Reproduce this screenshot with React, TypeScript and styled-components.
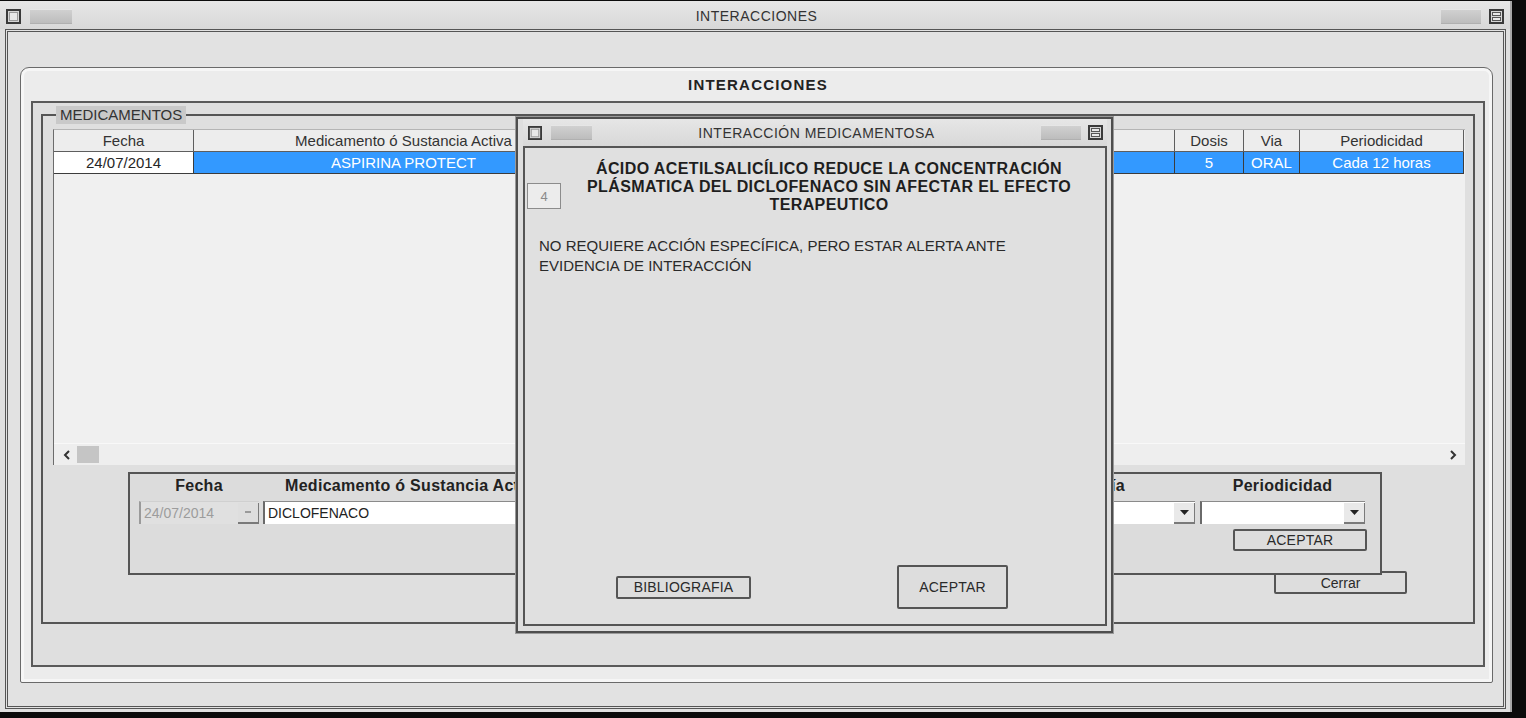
import styled, { createGlobalStyle } from "styled-components";

const GlobalStyle = createGlobalStyle`
  body {
    margin: 0;
    background: #0b0b0b;
    font-family: "Liberation Sans", Arial, sans-serif;
    color: #262626;
  }
`;

const Screen = styled.div`
  position: relative;
  width: 1526px;
  height: 718px;
  background: #0b0b0b;
  overflow: hidden;
`;

const Window = styled.div`
  width: 1510px;
  height: 711px;
  margin-top: 1px;
  background: #e0e0e0;
  border-right: 2px solid #a8a8a8;
  display: flex;
  flex-direction: column;
`;

const TitleBar = styled.div<{ $small?: boolean }>`
  display: flex;
  align-items: center;
  flex: none;
  box-sizing: border-box;
  height: ${(p) => (p.$small ? "27px" : "28px")};
  padding: ${(p) => (p.$small ? "0 4px 0 5px" : "2px 6px 0 6px")};
  background: linear-gradient(#e6e6e6, #d8d8d8);
`;

const TitleText = styled.div`
  flex: 1;
  text-align: center;
  font-size: 14px;
  letter-spacing: 0.5px;
  color: #333;
`;

const Grip = styled.div<{ $w: number; $gap: number; $side: "left" | "right" }>`
  width: ${(p) => p.$w}px;
  height: 13px;
  ${(p) => (p.$side === "left" ? `margin-left: ${p.$gap}px;` : `margin-right: ${p.$gap}px;`)}
  background: linear-gradient(#d0d0d0, #bdbdbd);
  border-top: 1px solid #e6e6e6;
  border-bottom: 1px solid #b0b0b0;
`;

const Client = styled.div`
  flex: 1;
  display: flex;
  margin: 0 4px 3px 5px;
  border: 3px double #555;
  padding: 35px 10px 23px 12px;
  background: #e2e2e2;
`;

const Panel = styled.div`
  flex: 1;
  display: flex;
  flex-direction: column;
  border: 1px solid #6a6a6a;
  border-radius: 9px 9px 2px 2px;
  background: #ececec;
  box-shadow: inset 0 0 0 3px #f6f6f6;
  padding: 0 7px 15px 10px;
`;

const PanelHeader = styled.div`
  height: 33px;
  display: flex;
  align-items: center;
  justify-content: center;
  font-size: 15px;
  font-weight: bold;
  letter-spacing: 1.2px;
  color: #222;
`;

const InnerBox = styled.div`
  flex: 1;
  display: flex;
  flex-direction: column;
  border: 2px solid #5a5a5a;
  background: #dfdfdf;
  padding: 3px 8px 41px 8px;
`;

const GroupBox = styled.fieldset`
  flex: 1;
  display: flex;
  flex-direction: column;
  margin: 0;
  min-width: 0;
  border: 2px solid #555;
  padding: 0 8px 28px 10px;
`;

const Legend = styled.legend`
  margin-left: 3px;
  padding: 0 4px;
  height: 18px;
  line-height: 18px;
  font-size: 15px;
  background: #c9c9c9;
  color: #333;
`;

const Table = styled.div`
  flex: 1;
  margin-top: 5px;
  display: flex;
  flex-direction: column;
  background: #f0f0f0;
  border-left: 1px solid #6c6c6c;
  border-top: 1px solid #b5b5b5;
`;

const columns = "140px 420px 561px 69px 56px 1fr";

const HeaderRow = styled.div`
  display: grid;
  grid-template-columns: ${columns};
  height: 22px;
  margin-right: 1px;
`;

const HeaderCell = styled.div`
  border-right: 1px solid #5e5e5e;
  border-bottom: 1px solid #5e5e5e;
  background: #ededed;
  text-align: center;
  line-height: 21px;
  font-size: 15px;
  color: #333;
  white-space: nowrap;
  overflow: hidden;
`;

const DataRow = styled.div`
  display: grid;
  grid-template-columns: ${columns};
  height: 22px;
  margin-right: 1px;
`;

const DataCell = styled.div<{ $selected?: boolean }>`
  border-right: 1px solid #3c3c3c;
  border-bottom: 1px solid #3c3c3c;
  background: ${(p) => (p.$selected ? "#3399ff" : "#ffffff")};
  color: ${(p) => (p.$selected ? "#ffffff" : "#262626")};
  text-align: center;
  line-height: 21px;
  font-size: 15px;
  white-space: nowrap;
  overflow: hidden;
`;

const TableBody = styled.div`
  flex: 1;
`;

const ScrollBar = styled.div`
  height: 21px;
  display: flex;
  align-items: center;
  background: #eeeeee;
  border-top: 1px solid #f8f8f8;
  padding: 0 8px 0 9px;
`;

const Thumb = styled.div`
  width: 22px;
  height: 17px;
  margin-left: 6px;
  background: #c5c5c5;
`;

const ScrollSpacer = styled.div`
  flex: 1;
`;

const FormBox = styled.div`
  position: relative;
  z-index: 1;
  flex: none;
  box-sizing: border-box;
  width: 1254px;
  height: 103px;
  margin: 7px 0 0 75px;
  border: 2px solid #555;
  background: #dcdcdc;
  padding: 0 13px 0 9px;
  display: flex;
  flex-direction: column;
`;

const FieldRow = styled.div`
  display: flex;
  gap: 4px;
`;

const Field = styled.div<{ $w: number; $gapLeft?: number }>`
  width: ${(p) => p.$w}px;
  margin-left: ${(p) => p.$gapLeft ?? 0}px;
  display: flex;
  flex-direction: column;
`;

const FieldLabel = styled.div<{ $left?: number }>`
  height: 24px;
  line-height: 24px;
  margin-bottom: 3px;
  font-size: 16px;
  font-weight: bold;
  letter-spacing: 0.3px;
  color: #222;
  white-space: nowrap;
  text-align: ${(p) => (p.$left !== undefined ? "left" : "center")};
  padding-left: ${(p) => p.$left ?? 0}px;
`;

const InputBox = styled.div<{ $disabled?: boolean }>`
  height: 23px;
  display: flex;
  align-items: center;
  box-sizing: border-box;
  background: ${(p) => (p.$disabled ? "#e0e0e0" : "#ffffff")};
  border-left: 2px solid ${(p) => (p.$disabled ? "#9a9a9a" : "#6a6a6a")};
  border-top: 1px solid ${(p) => (p.$disabled ? "#d0d0d0" : "#8a8a8a")};
  font-size: 14px;
  color: ${(p) => (p.$disabled ? "#9c9c9c" : "#222")};
  padding-left: 3px;
`;

const InputText = styled.span`
  flex: 1;
  white-space: nowrap;
  overflow: hidden;
`;

const DropButton = styled.div<{ $disabled?: boolean }>`
  width: 21px;
  height: 21px;
  display: flex;
  align-items: center;
  justify-content: center;
  background: ${(p) => (p.$disabled ? "#dedede" : "#e9e9e9")};
  border-right: 1px solid #7a7a7a;
  border-bottom: 2px solid #7a7a7a;
  box-sizing: border-box;
`;

const ButtonRow = styled.div`
  display: flex;
  justify-content: flex-end;
  margin-top: 5px;
`;

const WinButton = styled.div<{ $w: number; $h: number; $thin?: boolean }>`
  width: ${(p) => p.$w}px;
  height: ${(p) => p.$h}px;
  box-sizing: border-box;
  display: flex;
  align-items: center;
  justify-content: center;
  border: 2px solid #555;
  border-radius: 2px;
  background: #dddddd;
  font-size: 14px;
  color: #2a2a2a;
  letter-spacing: ${(p) => (p.$thin ? "0" : "0.2px")};
`;

const CerrarWrap = styled.div`
  flex: none;
  margin: -4px 0 0 1221px;
`;

const Dialog = styled.div`
  position: absolute;
  z-index: 10;
  left: 516px;
  top: 117px;
  width: 597px;
  height: 516px;
  box-sizing: border-box;
  border: 2px solid #4e4e4e;
  box-shadow: 0 0 0 1px #9a9a9a;
  background: #dedede;
  display: flex;
  flex-direction: column;
  padding: 0 4px 5px 5px;
`;

const DialogContent = styled.div`
  flex: 1;
  display: flex;
  flex-direction: column;
  border: 2px solid #555;
  background: #e0e0e0;
  padding: 12px 8px 15px 2px;
`;

const AlertHead = styled.div`
  display: flex;
  align-items: flex-start;
`;

const NumberBox = styled.div`
  width: 34px;
  height: 26px;
  box-sizing: border-box;
  margin-top: 23px;
  border: 1px solid #8c8c8c;
  background: #ececec;
  display: flex;
  align-items: center;
  justify-content: center;
  font-size: 13px;
  color: #8a8a8a;
`;

const AlertTitle = styled.div`
  flex: 1;
  text-align: center;
  font-size: 16px;
  line-height: 18px;
  font-weight: bold;
  letter-spacing: 0.4px;
  color: #1e1e1e;
`;

const AlertBody = styled.div`
  margin: 22px 0 0 12px;
  font-size: 15px;
  line-height: 20px;
  color: #2a2a2a;
`;

const DialogButtons = styled.div`
  margin-top: auto;
  display: flex;
  align-items: center;
  padding-left: 89px;
  gap: 146px;
`;

function BoxIcon({ size = 15 }: { size?: number }) {
  return (
    <svg width={size} height={size} viewBox="0 0 15 15">
      <rect x="1" y="1" width="13" height="13" fill="#d6d6d6" stroke="#3a3a3a" strokeWidth="2" />
      <rect x="3.5" y="3.5" width="8" height="8" fill="#e8e8e8" stroke="#9a9a9a" strokeWidth="1" />
    </svg>
  );
}

function ShadeIcon({ size = 15 }: { size?: number }) {
  return (
    <svg width={size} height={size} viewBox="0 0 15 15">
      <rect x="1" y="1" width="13" height="13" fill="#d6d6d6" stroke="#3a3a3a" strokeWidth="2" />
      <rect x="3.5" y="3.5" width="8" height="3" fill="#e8e8e8" stroke="#555" strokeWidth="1" />
      <rect x="3.5" y="8.5" width="8" height="3" fill="#e8e8e8" stroke="#555" strokeWidth="1" />
    </svg>
  );
}

function Chevron({ dir }: { dir: "left" | "right" }) {
  return (
    <svg width="8" height="10" viewBox="0 0 8 10">
      <polyline
        points={dir === "left" ? "6,1 2,5 6,9" : "2,1 6,5 2,9"}
        fill="none"
        stroke="#333"
        strokeWidth="2"
      />
    </svg>
  );
}

function Arrow({ muted }: { muted?: boolean }) {
  return muted ? (
    <svg width="8" height="4" viewBox="0 0 8 4">
      <rect x="1" y="1" width="6" height="2" fill="#9a9a9a" />
    </svg>
  ) : (
    <svg width="9" height="5" viewBox="0 0 9 5">
      <polygon points="0,0 9,0 4.5,5" fill="#222" />
    </svg>
  );
}

export default function App() {
  return (
    <Screen>
      <GlobalStyle />
      <Window>
        <TitleBar>
          <BoxIcon />
          <Grip $w={42} $gap={9} $side="left" />
          <TitleText>INTERACCIONES</TitleText>
          <Grip $w={40} $gap={8} $side="right" />
          <ShadeIcon />
        </TitleBar>
        <Client>
          <Panel>
            <PanelHeader>INTERACCIONES</PanelHeader>
            <InnerBox>
              <GroupBox>
                <Legend>MEDICAMENTOS</Legend>
                <Table>
                  <HeaderRow>
                    <HeaderCell>Fecha</HeaderCell>
                    <HeaderCell>Medicamento ó Sustancia Activa</HeaderCell>
                    <HeaderCell />
                    <HeaderCell>Dosis</HeaderCell>
                    <HeaderCell>Via</HeaderCell>
                    <HeaderCell>Periodicidad</HeaderCell>
                  </HeaderRow>
                  <DataRow>
                    <DataCell>24/07/2014</DataCell>
                    <DataCell $selected>ASPIRINA PROTECT</DataCell>
                    <DataCell $selected />
                    <DataCell $selected>5</DataCell>
                    <DataCell $selected>ORAL</DataCell>
                    <DataCell $selected>Cada 12 horas</DataCell>
                  </DataRow>
                  <TableBody />
                  <ScrollBar>
                    <Chevron dir="left" />
                    <Thumb />
                    <ScrollSpacer />
                    <Chevron dir="right" />
                  </ScrollBar>
                </Table>
                <FormBox>
                  <FieldRow>
                    <Field $w={120}>
                      <FieldLabel>Fecha</FieldLabel>
                      <InputBox $disabled>
                        <InputText>24/07/2014</InputText>
                        <DropButton $disabled>
                          <Arrow muted />
                        </DropButton>
                      </InputBox>
                    </Field>
                    <Field $w={497}>
                      <FieldLabel $left={22}>Medicamento ó Sustancia Activa</FieldLabel>
                      <InputBox>
                        <InputText>DICLOFENACO</InputText>
                      </InputBox>
                    </Field>
                    <Field $w={262}>
                      <FieldLabel />
                      <InputBox>
                        <InputText />
                      </InputBox>
                    </Field>
                    <Field $w={165}>
                      <FieldLabel>Vía</FieldLabel>
                      <InputBox>
                        <InputText />
                        <DropButton>
                          <Arrow />
                        </DropButton>
                      </InputBox>
                    </Field>
                    <Field $w={165} $gapLeft={1}>
                      <FieldLabel>Periodicidad</FieldLabel>
                      <InputBox>
                        <InputText />
                        <DropButton>
                          <Arrow />
                        </DropButton>
                      </InputBox>
                    </Field>
                  </FieldRow>
                  <ButtonRow>
                    <WinButton $w={134} $h={22}>ACEPTAR</WinButton>
                  </ButtonRow>
                </FormBox>
                <CerrarWrap>
                  <WinButton $w={133} $h={23} $thin>
                    Cerrar
                  </WinButton>
                </CerrarWrap>
              </GroupBox>
            </InnerBox>
          </Panel>
        </Client>
      </Window>

      <Dialog>
        <TitleBar $small>
          <BoxIcon size={14} />
          <Grip $w={41} $gap={9} $side="left" />
          <TitleText>INTERACCIÓN MEDICAMENTOSA</TitleText>
          <Grip $w={40} $gap={7} $side="right" />
          <ShadeIcon size={15} />
        </TitleBar>
        <DialogContent>
          <AlertHead>
            <NumberBox>4</NumberBox>
            <AlertTitle>
              ÁCIDO ACETILSALICÍLICO REDUCE LA CONCENTRACIÓN
              <br />
              PLÁSMATICA DEL DICLOFENACO SIN AFECTAR EL EFECTO
              <br />
              TERAPEUTICO
            </AlertTitle>
          </AlertHead>
          <AlertBody>
            NO REQUIERE ACCIÓN ESPECÍFICA, PERO ESTAR ALERTA ANTE
            <br />
            EVIDENCIA DE INTERACCIÓN
          </AlertBody>
          <DialogButtons>
            <WinButton $w={135} $h={23}>BIBLIOGRAFIA</WinButton>
            <WinButton $w={111} $h={44}>ACEPTAR</WinButton>
          </DialogButtons>
        </DialogContent>
      </Dialog>
    </Screen>
  );
}
